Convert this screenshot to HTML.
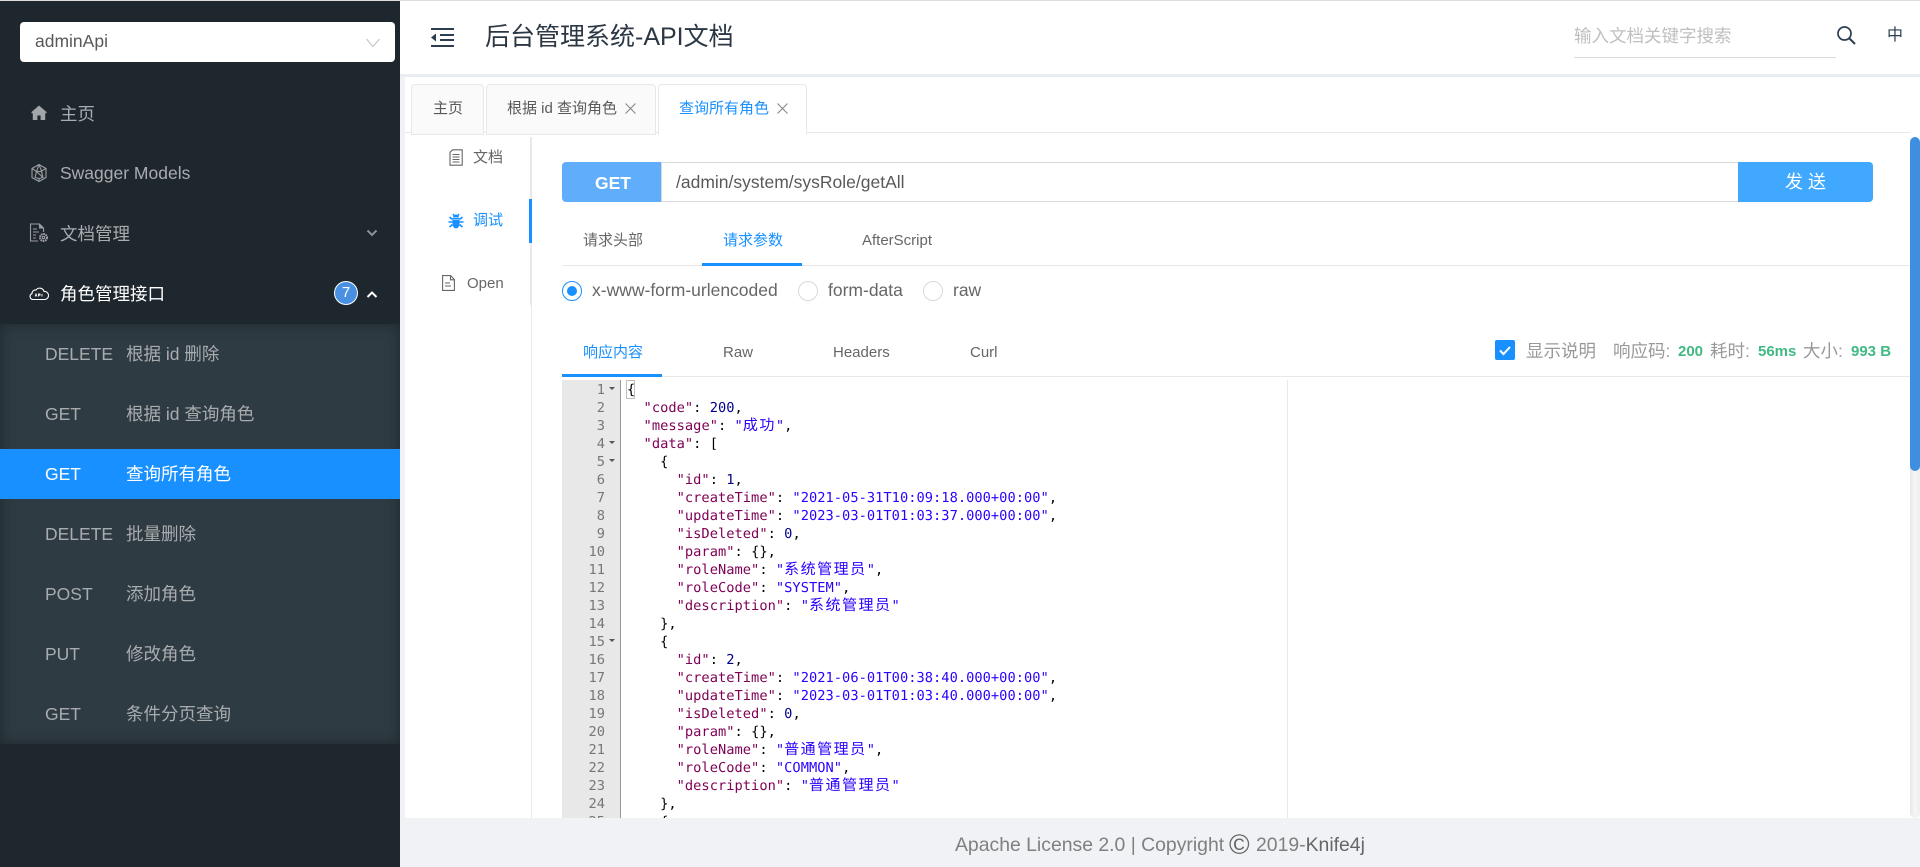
<!DOCTYPE html>
<html lang="zh"><head><meta charset="utf-8"><title>API文档</title>
<style>
html,body{margin:0;padding:0;width:1920px;height:867px;overflow:hidden;background:#fff}
body{position:relative;font-family:"Liberation Sans","Noto Sans CJK SC",sans-serif;font-size:17.5px;color:#666}
.a,.t{position:absolute}
.t{white-space:pre;line-height:20px}
svg{position:absolute;display:block}
.m{color:#a9acaf}
.w{color:#fff}
.b{color:#1890ff}
.f{font-size:15px}
.g{color:#42b983;font-weight:bold;font-size:15px}
pre{position:absolute;margin:0;font:13.7px/18px "DejaVu Sans Mono","Noto Sans CJK SC",monospace;text-rendering:geometricPrecision;letter-spacing:.03px;color:#000}
.gut{position:absolute;left:0;width:43px;text-align:right;white-space:pre;font:13.7px/18px "DejaVu Sans Mono",monospace;color:#777}
i{font-style:normal}
.k{color:#7f0055}.s{color:#2a00ff}.n{color:#00008b}
.c{font:15px/0 "Noto Sans CJK SC",sans-serif;letter-spacing:1.5px;color:#2a00ff}
</style></head><body>
<div class="a" style="left:0;top:0;width:400px;height:867px;background:#1f272e"></div>
<div class="a" style="left:0;top:0;width:1920px;height:1px;background:#ddd"></div>
<div class="a" style="left:20px;top:22px;width:375px;height:40px;background:#fff;border-radius:4px"></div>
<div class="t" style="left:35px;top:31px;color:#595959">adminApi</div>
<svg style="left:366px;top:38px" width="14" height="10" viewBox="0 0 14 10"><path d="M.5 1l6.500 7.500L13.500 1" fill="none" stroke="#c4c4c4" stroke-width="1.100"/></svg>

<svg style="left:30px;top:104px" width="18" height="18" viewBox="0 0 18 18"><path d="M9 1.500L1.500 8v1.200h1.300V16h4.600v-4.500h3.200V16h4.600V9.200h1.300V8z" fill="#a3a6a9"/></svg>
<div class="t m" style="left:60px;top:104px">主页</div>
<svg style="left:30px;top:163px" width="18" height="20" viewBox="0 0 18 20" fill="none" stroke="#9a9da0" stroke-width="1.100"><path d="M9 1.500l7 4v9l-7 4-7-4v-9z"/><path d="M9 1.500l2.500 6.500 4.500-2.500M11.500 8l1.500 6.500M2 5.500l4.500 3L9 1.500M6.500 8.500L5 14.500M6.500 8.500h5L13 14.500l-4 1-4-1M9 15.500v3M6.500 8.500l6.500 6"/></svg>
<div class="t m" style="left:60px;top:163px">Swagger Models</div>
<svg style="left:29px;top:223px" width="20" height="20" viewBox="0 0 20 20" fill="none" stroke="#9a9da0" stroke-width="1.100"><path d="M9 18H1.500V1h9l4 4v4"/><path d="M10.500 1v4h4" fill="#9a9da0"/><path d="M4 6h4M4 9h6M4 12h3M4 15h3"/><circle cx="14.500" cy="14.500" r="3.500" stroke-width="2" stroke-dasharray="1.700 .6"/><circle cx="14.500" cy="14.500" r="1.200" fill="#1f272e"/></svg>
<div class="t m" style="left:60px;top:224px">文档管理</div>
<svg style="left:366px;top:229px" width="12" height="9" viewBox="0 0 12 9"><path d="M1.500 1.500l4.500 4.500 4.500-4.500" fill="none" stroke="#8d9194" stroke-width="2"/></svg>

<svg style="left:29px;top:285px" width="20" height="16" viewBox="0 0 20 16" fill="none" stroke="#fff" stroke-width="1.100"><path d="M5 14.500H4a3 3 0 0 1-1-5.800A3.500 3.500 0 0 1 7 5a4.500 4.500 0 0 1 8 1.500 3.800 3.800 0 0 1 1 8z"/><path d="M6 11.500l1-2.500 1 2.500M9.500 11.500V9h1.500v1.200H9.500M13 9v2.500" stroke-width=".9"/></svg>
<div class="t w" style="left:60px;top:284px">角色管理接口</div>
<div class="a" style="left:335px;top:282px;width:22px;height:22px;border-radius:50%;background:#4a90e2;box-shadow:0 0 0 1px #fff;color:#fff;font-size:15px;line-height:22px;text-align:center">7</div>
<svg style="left:366px;top:290px" width="12" height="9" viewBox="0 0 12 9"><path d="M1.500 7L6 2.500 10.500 7" fill="none" stroke="#fff" stroke-width="2"/></svg>

<div class="a" style="left:0;top:324px;width:400px;height:420px;background:#2e3b42;box-shadow:inset 0 0 14px rgba(0,0,0,.35)"></div>
<div class="a" style="left:0;top:449px;width:400px;height:50px;background:#1890ff"></div>
<div class="t m" style="left:45px;top:344px">DELETE</div><div class="t m" style="left:126px;top:344px">根据 id 删除</div>
<div class="t m" style="left:45px;top:404px">GET</div><div class="t m" style="left:126px;top:404px">根据 id 查询角色</div>
<div class="t w" style="left:45px;top:464px">GET</div><div class="t w" style="left:126px;top:464px">查询所有角色</div>
<div class="t m" style="left:45px;top:524px">DELETE</div><div class="t m" style="left:126px;top:524px">批量删除</div>
<div class="t m" style="left:45px;top:584px">POST</div><div class="t m" style="left:126px;top:584px">添加角色</div>
<div class="t m" style="left:45px;top:644px">PUT</div><div class="t m" style="left:126px;top:644px">修改角色</div>
<div class="t m" style="left:45px;top:704px">GET</div><div class="t m" style="left:126px;top:704px">条件分页查询</div>

<!-- header -->
<div class="a" style="left:400px;top:74px;width:1520px;height:3px;background:#e9edf1"></div>
<svg style="left:431px;top:27px" width="23" height="21" viewBox="0 0 23 21" fill="#2c3e50"><path d="M0 1h23v2H0zM9 7h14v2H9zM9 12h14v2H9zM0 18h23v2H0zM5 6.500v8L0 10.500z"/></svg>
<div class="t" style="left:485px;top:24px;font-size:25px;line-height:26px;color:#2c3744">后台管理系统-API文档</div>
<div class="t" style="left:1574px;top:26px;color:#bfbfbf">输入文档关键字搜索</div>
<div class="a" style="left:1574px;top:57px;width:262px;height:1px;background:#d9d9d9"></div>
<svg style="left:1836px;top:25px" width="20" height="20" viewBox="0 0 20 20" fill="none" stroke="#2c3e50"><circle cx="8.500" cy="8.500" r="6.500" stroke-width="1.700"/><path d="M13 13l6 6" stroke-width="2"/></svg>
<div class="t" style="left:1887px;top:26px;font-size:16px;color:#2c3e50">中</div>

<!-- left strip + tabs -->
<div class="a" style="left:400px;top:77px;width:5px;height:790px;background:#f0f2f5"></div>
<div class="a" style="left:405px;top:132px;width:1505px;height:1px;background:#e8e8e8"></div>
<div class="a" style="left:411px;top:84px;width:71px;height:49px;background:#fafafa;border:1px solid #e8e8e8;border-radius:4px 4px 0 0;box-sizing:content-box"></div>
<div class="t f" style="left:433px;top:99px;color:#595959">主页</div>
<div class="a" style="left:486px;top:84px;width:168px;height:49px;background:#fafafa;border:1px solid #e8e8e8;border-radius:4px 4px 0 0"></div>
<div class="t f" style="left:507px;top:99px;color:#595959">根据 id 查询角色</div>
<svg style="left:625px;top:103px" width="11" height="11" viewBox="0 0 11 11"><path d="M.5.500l10 10M10.500.500l-10 10" stroke="#888" stroke-width="1.100"/></svg>
<div class="a" style="left:658px;top:84px;width:147px;height:49px;background:#fff;border:1px solid #e8e8e8;border-bottom:1px solid #fff;border-radius:4px 4px 0 0"></div>
<div class="t f b" style="left:679px;top:99px">查询所有角色</div>
<svg style="left:777px;top:103px" width="11" height="11" viewBox="0 0 11 11"><path d="M.5.500l10 10M10.500.500l-10 10" stroke="#888" stroke-width="1.100"/></svg>

<!-- side nav -->
<div class="a" style="left:530px;top:137px;width:2px;height:168px;background:#e8e8e8"></div>
<div class="a" style="left:531px;top:305px;width:1px;height:513px;background:#e8e8e8"></div>
<div class="a" style="left:529px;top:199px;width:3px;height:44px;background:#1890ff"></div>
<svg style="left:449px;top:149px" width="14" height="17" viewBox="0 0 14 17" fill="none" stroke="#666" stroke-width="1.100"><path d="M3.500.8h9.700v15.400H1V3.300z"/><path d="M3.500 5.500h7M3.500 8h7M3.500 10.500h7M3.500 13h7"/></svg>
<div class="t f" style="left:473px;top:148px;color:#666">文档</div>
<svg style="left:448px;top:212px" width="16" height="17" viewBox="0 0 16 17" fill="#1890ff"><path d="M4.500 6h7v1h-7zM4.500 7.500h7V12a3.500 4.500 0 0 1-7 0zM5 5.500a3 3 0 0 1 6 0z"/><path d="M1.500 5l3 2.500M14.500 5l-3 2.500M.5 10h4M15.500 10h-4M1.500 15l3-2.500M14.500 15l-3-2.500M5 2L6 3.500M11 2l-1 1.500" stroke="#1890ff" stroke-width="1.600" fill="none"/></svg>
<div class="t f b" style="left:473px;top:211px">调试</div>
<svg style="left:442px;top:275px" width="13" height="16" viewBox="0 0 13 16" fill="none" stroke="#666" stroke-width="1.100"><path d="M.6.600h8l3.800 4v10.800H.6z"/><path d="M8.500.600v4.200h3.900M3 8h5M3 11h6"/></svg>
<div class="t f" style="left:467px;top:274px;color:#666">Open</div>

<!-- url bar -->
<div class="a" style="left:562px;top:162px;width:100px;height:40px;background:#5fadfb;border-radius:4px 0 0 4px"></div>
<div class="t" style="left:595px;top:173px;color:#fff;font-weight:bold">GET</div>
<div class="a" style="left:661px;top:162px;width:1078px;height:38px;border-top:1px solid #d9d9d9;border-bottom:1px solid #d9d9d9;border-left:1px solid #d9d9d9"></div>
<div class="t" style="left:676px;top:172px;color:#595959">/admin/system/sysRole/getAll</div>
<div class="a" style="left:1738px;top:162px;width:135px;height:40px;background:#40a9ff;border-radius:0 4px 4px 0;box-shadow:0 2px 0 rgba(0,0,0,.015)"></div>
<div class="t" style="left:1785px;top:172px;color:#fff;font-size:18px;letter-spacing:5px">发送</div>

<!-- sub tabs -->
<div class="t f" style="left:583px;top:231px;color:#666">请求头部</div>
<div class="t f b" style="left:723px;top:231px">请求参数</div>
<div class="t f" style="left:862px;top:231px;color:#666">AfterScript</div>
<div class="a" style="left:562px;top:265px;width:1348px;height:1px;background:#e8e8e8"></div>
<div class="a" style="left:702px;top:263px;width:100px;height:3px;background:#1890ff"></div>

<!-- radios -->
<div class="a" style="left:562px;top:281px;width:18px;height:18px;border:1px solid #1890ff;border-radius:50%;background:#fff"></div>
<div class="a" style="left:567px;top:286px;width:10px;height:10px;background:#1890ff;border-radius:50%"></div>
<div class="t" style="left:592px;top:280px">x-www-form-urlencoded</div>
<div class="a" style="left:798px;top:281px;width:18px;height:18px;border:1px solid #d9d9d9;border-radius:50%"></div>
<div class="t" style="left:828px;top:280px">form-data</div>
<div class="a" style="left:923px;top:281px;width:18px;height:18px;border:1px solid #d9d9d9;border-radius:50%"></div>
<div class="t" style="left:953px;top:280px">raw</div>

<!-- response tabs -->
<div class="t f b" style="left:583px;top:343px">响应内容</div>
<div class="t f" style="left:723px;top:343px;color:#666">Raw</div>
<div class="t f" style="left:833px;top:343px;color:#666">Headers</div>
<div class="t f" style="left:970px;top:343px;color:#666">Curl</div>
<div class="a" style="left:562px;top:376px;width:1348px;height:1px;background:#e8e8e8"></div>
<div class="a" style="left:562px;top:374px;width:100px;height:3px;background:#1890ff"></div>
<div class="a" style="left:1495px;top:340px;width:20px;height:20px;background:#1890ff;border-radius:2px"></div>
<svg style="left:1495px;top:340px" width="20" height="20" viewBox="0 0 20 20"><path d="M5 10.500l3.500 3.500L15 7" fill="none" stroke="#fff" stroke-width="2"/></svg>
<div class="t" style="left:1526px;top:341px;color:#999">显示说明</div>
<div class="t" style="left:1613px;top:341px;color:#999">响应码:</div>
<div class="t g" style="left:1678px;top:342px">200</div>
<div class="t" style="left:1710px;top:341px;color:#999">耗时:</div>
<div class="t g" style="left:1758px;top:342px">56ms</div>
<div class="t" style="left:1803px;top:341px;color:#999">大小:</div>
<div class="t g" style="left:1851px;top:342px">993 B</div>

<!-- editor -->
<div class="a" style="left:562px;top:380px;width:1348px;height:438px;overflow:hidden">
<div class="a" style="left:0;top:0;width:59px;height:438px;background:#e8e8e8;border-right:1px solid #999;box-sizing:border-box"></div>
<div class="a" style="left:725px;top:0;width:1px;height:438px;background:#e8e8e8"></div>
<div class="a" style="left:64px;top:0;width:7px;height:17px;border:1px solid #c0c0c0"></div>
<div class="gut" style="top:1px">1
2
3
4
5
6
7
8
9
10
11
12
13
14
15
16
17
18
19
20
21
22
23
24
25</div>
<svg style="left:0;top:0" width="59" height="300" fill="#555"><path d="M47 7h6l-3 3zM47 61h6l-3 3zM47 79h6l-3 3zM47 259h6l-3 3z"/></svg>
<pre style="left:65px;top:1px">{
  <i class="k">"code"</i>: <i class="n">200</i>,
  <i class="k">"message"</i>: <i class="s">"</i><i class="c">成功</i><i class="s">"</i>,
  <i class="k">"data"</i>: [
    {
      <i class="k">"id"</i>: <i class="n">1</i>,
      <i class="k">"createTime"</i>: <i class="s">"2021-05-31T10:09:18.000+00:00"</i>,
      <i class="k">"updateTime"</i>: <i class="s">"2023-03-01T01:03:37.000+00:00"</i>,
      <i class="k">"isDeleted"</i>: <i class="n">0</i>,
      <i class="k">"param"</i>: {},
      <i class="k">"roleName"</i>: <i class="s">"</i><i class="c">系统管理员</i><i class="s">"</i>,
      <i class="k">"roleCode"</i>: <i class="s">"SYSTEM"</i>,
      <i class="k">"description"</i>: <i class="s">"</i><i class="c">系统管理员</i><i class="s">"</i>
    },
    {
      <i class="k">"id"</i>: <i class="n">2</i>,
      <i class="k">"createTime"</i>: <i class="s">"2021-06-01T00:38:40.000+00:00"</i>,
      <i class="k">"updateTime"</i>: <i class="s">"2023-03-01T01:03:40.000+00:00"</i>,
      <i class="k">"isDeleted"</i>: <i class="n">0</i>,
      <i class="k">"param"</i>: {},
      <i class="k">"roleName"</i>: <i class="s">"</i><i class="c">普通管理员</i><i class="s">"</i>,
      <i class="k">"roleCode"</i>: <i class="s">"COMMON"</i>,
      <i class="k">"description"</i>: <i class="s">"</i><i class="c">普通管理员</i><i class="s">"</i>
    },
    {</pre>
</div>

<!-- scrollbar -->
<div class="a" style="left:1910px;top:137px;width:10px;height:681px;background:linear-gradient(90deg,#e8e8e8,#f6f6f6 50%,#eee);border-radius:5px"></div>
<div class="a" style="left:1910px;top:137px;width:10px;height:334px;background:#3f8ee0;border-radius:5px"></div>

<!-- footer -->
<div class="a" style="left:400px;top:818px;width:1520px;height:49px;background:#f0f2f5"></div>
<div class="t" style="left:955px;top:835px;font-size:19.400px;color:#808080">Apache License 2.0 | Copyright</div>
<div class="t" style="left:1229px;top:835px;font-size:28px;color:#666;line-height:20px">©</div>
<div class="t" style="left:1256px;top:835px;font-size:19.400px;color:#808080">2019-<span style="color:#666">Knife4j</span></div>
</body></html>
